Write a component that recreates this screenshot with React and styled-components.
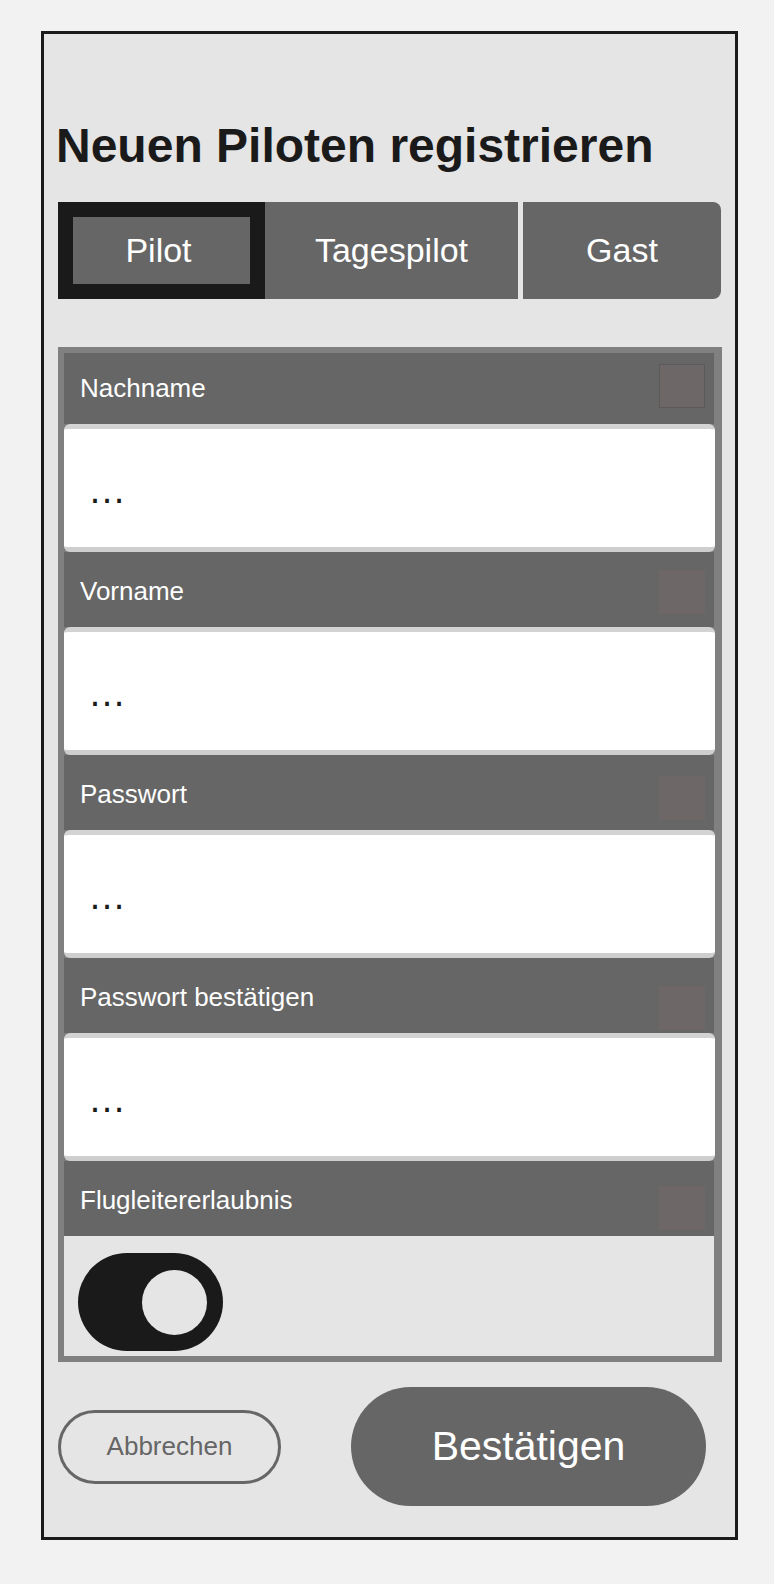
import styled, { createGlobalStyle } from 'styled-components'

const GlobalStyle = createGlobalStyle`
  * { box-sizing: border-box; }
  body {
    margin: 0;
    background: #f2f2f2;
    font-family: "Liberation Sans", Arial, sans-serif;
  }
`

const Frame = styled.div`
  margin: 31px 0 0 41px;
  width: 697px;
  border: 3px solid #1a1a1a;
  background: #e5e5e5;
  padding: 84px 13px 31px 14px;
`

const Title = styled.h1`
  margin: 0 0 0 -2px;
  font-size: 48px;
  line-height: 56px;
  font-weight: 700;
  color: #1a1a1a;
`

const TabBar = styled.div`
  display: flex;
  margin-top: 28px;
  height: 97px;
`

const Tab = styled.div`
  width: ${p => p.$w}px;
  margin-left: ${p => p.$gap || 0}px;
  background: #666666;
  border: ${p => (p.$active ? '15px solid #1a1a1a' : 'none')};
  border-radius: ${p => (p.$last ? '0 8px 8px 0' : '0')};
  padding-right: ${p => (p.$active ? 6 : 0)}px;
  display: flex;
  align-items: center;
  justify-content: center;
  color: #ffffff;
  font-size: 34px;
`

const Section = styled.div`
  margin-top: 48px;
  width: 664px;
  background: #7d7d7d;
  border: 6px solid #808080;
  border-right-width: 8px;
`

const FieldHeader = styled.div`
  display: flex;
  align-items: flex-start;
  justify-content: space-between;
  height: ${p => (p.$first ? 71 : 75)}px;
  background: #666666;
  padding: 0 9px 0 16px;
`

const Label = styled.span`
  margin-top: ${p => (p.$first ? 20 : 24)}px;
  font-size: 26px;
  line-height: 30px;
  color: #ffffff;
`

const Marker = styled.span`
  margin-top: ${p => p.$top}px;
  width: 46px;
  height: 44px;
  background: #6d6767;
  border: ${p => (p.$framed ? '1px solid #5c5a5a' : 'none')};
`

const InputBox = styled.div`
  height: 128px;
  margin-right: -1px;
  background: #ffffff;
  border-top: 5px solid #d3d3d3;
  border-bottom: 5px solid #cecece;
  border-radius: 6px;
  padding: 42px 0 0 24px;
  font-size: 38px;
  line-height: 38px;
  color: #1a1a1a;
`

const ToggleArea = styled.div`
  height: 120px;
  background: #e5e5e5;
  padding: 17px 0 0 14px;
`

const Toggle = styled.div`
  width: 145px;
  height: 98px;
  border-radius: 49px;
  background: #1a1a1a;
  display: flex;
  align-items: center;
  justify-content: flex-end;
  padding-right: 16px;
`

const Knob = styled.span`
  width: 65px;
  height: 65px;
  border-radius: 50%;
  background: #e5e5e5;
`

const ButtonRow = styled.div`
  display: flex;
  align-items: center;
  justify-content: space-between;
  margin-top: 25px;
  padding-right: 16px;
  height: 119px;
`

const CancelButton = styled.button`
  width: 223px;
  height: 74px;
  border: 3px solid #666666;
  border-radius: 37px;
  background: transparent;
  color: #666666;
  font-family: inherit;
  font-size: 26px;
  padding: 0;
`

const ConfirmButton = styled.button`
  width: 355px;
  height: 119px;
  border: none;
  border-radius: 60px;
  background: #666666;
  color: #ffffff;
  font-family: inherit;
  font-size: 41px;
  padding: 0;
`

const fields = [
  { label: 'Nachname', top: 11, framed: true },
  { label: 'Vorname', top: 18 },
  { label: 'Passwort', top: 21 },
  { label: 'Passwort bestätigen', top: 28 },
]

const App = () => {
  return (
    <>
      <GlobalStyle />
      <Frame>
        <Title>Neuen Piloten registrieren</Title>
        <TabBar>
          <Tab $w={207} $active>Pilot</Tab>
          <Tab $w={253}>Tagespilot</Tab>
          <Tab $w={198} $gap={5} $last>Gast</Tab>
        </TabBar>
        <Section>
          {fields.map((f, i) => (
            <div key={f.label}>
              <FieldHeader $first={i === 0}>
                <Label $first={i === 0}>{f.label}</Label>
                <Marker $top={f.top} $framed={f.framed} />
              </FieldHeader>
              <InputBox>…</InputBox>
            </div>
          ))}
          <FieldHeader>
            <Label>Flugleitererlaubnis</Label>
            <Marker $top={25} />
          </FieldHeader>
          <ToggleArea>
            <Toggle>
              <Knob />
            </Toggle>
          </ToggleArea>
        </Section>
        <ButtonRow>
          <CancelButton>Abbrechen</CancelButton>
          <ConfirmButton>Bestätigen</ConfirmButton>
        </ButtonRow>
      </Frame>
    </>
  )
}

export default App
